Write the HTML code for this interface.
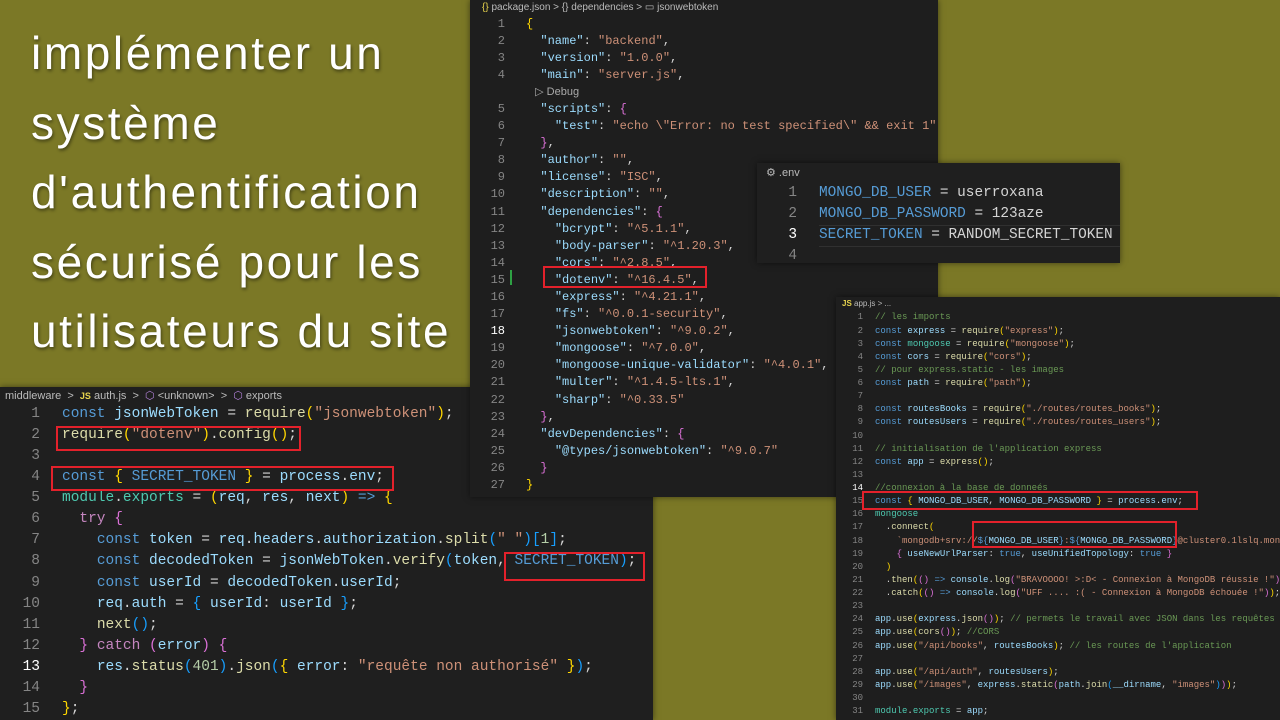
<!DOCTYPE html>
<html><head><meta charset="utf-8"><style>
*{margin:0;padding:0;box-sizing:border-box}
body{width:1280px;height:720px;overflow:hidden;background:#7b7826;position:relative;font-family:"Liberation Sans",sans-serif}
.title{position:absolute;left:31px;top:19px;color:#fff;font-size:46px;line-height:69.5px;text-shadow:1px 2px 3px rgba(0,0,0,.45);letter-spacing:2.6px;white-space:nowrap}
.panel{position:absolute;background:#1e1e1e;overflow:hidden;box-shadow:0 0 6px rgba(0,0,0,.5)}
.code{position:absolute;font-family:"Liberation Mono",monospace;white-space:pre;color:#d4d4d4}
.nums{position:absolute;font-family:"Liberation Mono",monospace;text-align:right;color:#858585;white-space:pre}
.crumb{position:absolute;color:#bbb;font-size:10px;font-family:"Liberation Sans",sans-serif;white-space:pre}
.k{color:#569cd6}.v{color:#9cdcfe}.s{color:#ce9178}.f{color:#dcdcaa}.c{color:#6a9955}.g{color:#ffd700}.p{color:#da70d6}.b{color:#179fff}.t{color:#4ec9b0}.n{color:#b5cea8}.m{color:#c586c0}
.red{position:absolute;border:2px solid #e3212b}
.w{color:#fff}
</style></head><body>
<div class="title">implémenter un<br>système<br>d'authentification<br>sécurisé pour les<br>utilisateurs du site</div>

<!-- auth.js -->
<div class="panel" style="left:0;top:387px;width:653px;height:333px;background:#1f1f1f">
<div class="crumb" style="left:5px;top:2px;font-size:11px">middleware  &gt;  <span style="color:#e8d44d;font-weight:bold;font-size:9px">JS</span> auth.js  &gt;  <span style="color:#b180d7">⬡</span> &lt;unknown&gt;  &gt;  <span style="color:#b180d7">⬡</span> exports</div>
<div class="nums" style="left:0;top:17px;width:40px;font-size:14.5px;line-height:21.07px">1
2
3
4
5
6
7
8
9
10
11
12
<span class="w">13</span>
14
15</div>
<div class="code" style="left:62px;top:17px;font-size:14.5px;line-height:21.07px"><span class="k">const</span> <span class="v">jsonWebToken</span> = <span class="f">require</span><span class="g">(</span><span class="s">"jsonwebtoken"</span><span class="g">)</span>;
<span class="f">require</span><span class="g">(</span><span class="s">"dotenv"</span><span class="g">)</span>.<span class="f">config</span><span class="g">()</span>;

<span class="k">const</span> <span class="g">{</span> <span class="k">SECRET_TOKEN</span> <span class="g">}</span> = <span class="v">process</span>.<span class="v">env</span>;
<span class="t">module</span>.<span class="t">exports</span> = <span class="g">(</span><span class="v">req</span>, <span class="v">res</span>, <span class="v">next</span><span class="g">)</span> <span class="k">=&gt;</span> <span class="g">{</span>
  <span class="m">try</span> <span class="p">{</span>
    <span class="k">const</span> <span class="v">token</span> = <span class="v">req</span>.<span class="v">headers</span>.<span class="v">authorization</span>.<span class="f">split</span><span class="b">(</span><span class="s">" "</span><span class="b">)[</span><span class="n">1</span><span class="b">]</span>;
    <span class="k">const</span> <span class="v">decodedToken</span> = <span class="v">jsonWebToken</span>.<span class="f">verify</span><span class="b">(</span><span class="v">token</span>, <span class="k">SECRET_TOKEN</span><span class="b">)</span>;
    <span class="k">const</span> <span class="v">userId</span> = <span class="v">decodedToken</span>.<span class="v">userId</span>;
    <span class="v">req</span>.<span class="v">auth</span> = <span class="b">{</span> <span class="v">userId</span>: <span class="v">userId</span> <span class="b">}</span>;
    <span class="f">next</span><span class="b">()</span>;
  <span class="p">}</span> <span class="m">catch</span> <span class="p">(</span><span class="v">error</span><span class="p">)</span> <span class="p">{</span>
    <span class="v">res</span>.<span class="f">status</span><span class="b">(</span><span class="n">401</span><span class="b">)</span>.<span class="f">json</span><span class="b">(</span><span class="g">{</span> <span class="v">error</span>: <span class="s">"requête non authorisé"</span> <span class="g">}</span><span class="b">)</span>;
  <span class="p">}</span>
<span class="g">}</span>;</div>
</div>
<div class="red" style="left:56px;top:426px;width:245px;height:25px"></div>
<div class="red" style="left:51px;top:466px;width:343px;height:25px"></div>
<div class="red" style="left:504px;top:552px;width:141px;height:29px"></div>

<!-- package.json -->
<div class="panel" style="left:470px;top:0;width:468px;height:497px">
<div class="crumb" style="left:12px;top:2px"><span style="color:#e8d44d">{}</span> package.json &gt; {} dependencies &gt; ▭ jsonwebtoken</div>
<div class="nums" style="left:0;top:15.5px;width:35px;font-size:12px;line-height:17.1px">1
2
3
4

5
6
7
8
9
10
11
12
13
14
15
16
17
<span class="w">18</span>
19
20
21
22
23
24
25
26
27</div>
<div style="position:absolute;left:40px;top:270px;width:2px;height:15px;background:#2ea043"></div>
<div class="code" style="left:56px;top:15.5px;font-size:12px;line-height:17.1px"><span class="g">{</span>
  <span class="v">"name"</span>: <span class="s">"backend"</span>,
  <span class="v">"version"</span>: <span class="s">"1.0.0"</span>,
  <span class="v">"main"</span>: <span class="s">"server.js"</span>,
<span style="font-family:'Liberation Sans',sans-serif;color:#aaa;font-size:11px">   ▷ Debug</span>
  <span class="v">"scripts"</span>: <span class="p">{</span>
    <span class="v">"test"</span>: <span class="s">"echo \"Error: no test specified\" &amp;&amp; exit 1"</span>
  <span class="p">}</span>,
  <span class="v">"author"</span>: <span class="s">""</span>,
  <span class="v">"license"</span>: <span class="s">"ISC"</span>,
  <span class="v">"description"</span>: <span class="s">""</span>,
  <span class="v">"dependencies"</span>: <span class="p">{</span>
    <span class="v">"bcrypt"</span>: <span class="s">"^5.1.1"</span>,
    <span class="v">"body-parser"</span>: <span class="s">"^1.20.3"</span>,
    <span class="v">"cors"</span>: <span class="s">"^2.8.5"</span>,
    <span class="v">"dotenv"</span>: <span class="s">"^16.4.5"</span>,
    <span class="v">"express"</span>: <span class="s">"^4.21.1"</span>,
    <span class="v">"fs"</span>: <span class="s">"^0.0.1-security"</span>,
    <span class="v">"jsonwebtoken"</span>: <span class="s">"^9.0.2"</span>,
    <span class="v">"mongoose"</span>: <span class="s">"^7.0.0"</span>,
    <span class="v">"mongoose-unique-validator"</span>: <span class="s">"^4.0.1"</span>,
    <span class="v">"multer"</span>: <span class="s">"^1.4.5-lts.1"</span>,
    <span class="v">"sharp"</span>: <span class="s">"^0.33.5"</span>
  <span class="p">}</span>,
  <span class="v">"devDependencies"</span>: <span class="p">{</span>
    <span class="v">"@types/jsonwebtoken"</span>: <span class="s">"^9.0.7"</span>
  <span class="p">}</span>
<span class="g">}</span></div>
</div>
<div class="red" style="left:543px;top:266px;width:164px;height:22px"></div>

<!-- .env -->
<div class="panel" style="left:757px;top:163px;width:363px;height:100px;background:#1f1f1f">
<div class="crumb" style="left:9px;top:3px;font-size:11px;color:#bbb">⚙ .env</div>
<div class="nums" style="left:0;top:20px;width:40px;font-size:14.4px;line-height:21px">1
2
<span class="w">3</span>
4</div>
<div style="position:absolute;left:62px;top:62px;width:301px;height:22px;border-top:1px solid #303030;border-bottom:1px solid #303030"></div>
<div class="code" style="left:62px;top:20px;font-size:14.4px;line-height:21px"><span class="k">MONGO_DB_USER</span> = userroxana
<span class="k">MONGO_DB_PASSWORD</span> = 123aze
<span class="k">SECRET_TOKEN</span> = RANDOM_SECRET_TOKEN
</div>
</div>

<!-- app.js -->
<div class="panel" style="left:836px;top:297px;width:444px;height:423px">
<div class="crumb" style="left:6px;top:2px;font-size:8px"><span style="color:#e8d44d;font-weight:bold">JS</span> app.js &gt; ...</div>
<div class="nums" style="left:0;top:14.4px;width:27px;font-size:9px;line-height:13.13px">1
2
3
4
5
6
7
8
9
10
11
12
13
<span class="w">14</span>
15
16
17
18
19
20
21
22
23
24
25
26
27
28
29
30
31</div>
<div class="code" style="left:39px;top:14.4px;font-size:9px;line-height:13.13px"><span class="c">// les imports</span>
<span class="k">const</span> <span class="v">express</span> = <span class="f">require</span><span class="g">(</span><span class="s">"express"</span><span class="g">)</span>;
<span class="k">const</span> <span class="t">mongoose</span> = <span class="f">require</span><span class="g">(</span><span class="s">"mongoose"</span><span class="g">)</span>;
<span class="k">const</span> <span class="v">cors</span> = <span class="f">require</span><span class="g">(</span><span class="s">"cors"</span><span class="g">)</span>;
<span class="c">// pour express.static - les images</span>
<span class="k">const</span> <span class="v">path</span> = <span class="f">require</span><span class="g">(</span><span class="s">"path"</span><span class="g">)</span>;

<span class="k">const</span> <span class="v">routesBooks</span> = <span class="f">require</span><span class="g">(</span><span class="s">"./routes/routes_books"</span><span class="g">)</span>;
<span class="k">const</span> <span class="v">routesUsers</span> = <span class="f">require</span><span class="g">(</span><span class="s">"./routes/routes_users"</span><span class="g">)</span>;

<span class="c">// initialisation de l'application express</span>
<span class="k">const</span> <span class="v">app</span> = <span class="f">express</span><span class="g">()</span>;

<span class="c">//connexion à la base de donneés</span>
<span class="k">const</span> <span class="g">{</span> <span class="v">MONGO_DB_USER</span>, <span class="v">MONGO_DB_PASSWORD</span> <span class="g">}</span> = <span class="v">process</span>.<span class="v">env</span>;
<span class="t">mongoose</span>
  .<span class="f">connect</span><span class="g">(</span>
    <span class="s">`mongodb+srv://</span><span class="k">${</span><span class="v">MONGO_DB_USER</span><span class="k">}</span><span class="s">:</span><span class="k">${</span><span class="v">MONGO_DB_PASSWORD</span><span class="k">}</span><span class="s">@cluster0.1lslq.mongodb.net</span>
    <span class="p">{</span> <span class="v">useNewUrlParser</span>: <span class="k">true</span>, <span class="v">useUnifiedTopology</span>: <span class="k">true</span> <span class="p">}</span>
  <span class="g">)</span>
  .<span class="f">then</span><span class="g">(</span><span class="p">()</span> <span class="k">=&gt;</span> <span class="v">console</span>.<span class="f">log</span><span class="p">(</span><span class="s">"BRAVOOOO! &gt;:D&lt; - Connexion à MongoDB réussie !"</span><span class="p">)</span><span class="g">)</span>
  .<span class="f">catch</span><span class="g">(</span><span class="p">()</span> <span class="k">=&gt;</span> <span class="v">console</span>.<span class="f">log</span><span class="p">(</span><span class="s">"UFF .... :( - Connexion à MongoDB échouée !"</span><span class="p">)</span><span class="g">)</span>;

<span class="v">app</span>.<span class="f">use</span><span class="g">(</span><span class="v">express</span>.<span class="f">json</span><span class="p">()</span><span class="g">)</span>; <span class="c">// permets le travail avec JSON dans les requêtes</span>
<span class="v">app</span>.<span class="f">use</span><span class="g">(</span><span class="f">cors</span><span class="p">()</span><span class="g">)</span>; <span class="c">//CORS</span>
<span class="v">app</span>.<span class="f">use</span><span class="g">(</span><span class="s">"/api/books"</span>, <span class="v">routesBooks</span><span class="g">)</span>; <span class="c">// les routes de l'application</span>

<span class="v">app</span>.<span class="f">use</span><span class="g">(</span><span class="s">"/api/auth"</span>, <span class="v">routesUsers</span><span class="g">)</span>;
<span class="v">app</span>.<span class="f">use</span><span class="g">(</span><span class="s">"/images"</span>, <span class="v">express</span>.<span class="f">static</span><span class="p">(</span><span class="v">path</span>.<span class="f">join</span><span class="b">(</span><span class="v">__dirname</span>, <span class="s">"images"</span><span class="b">)</span><span class="p">)</span><span class="g">)</span>;

<span class="t">module</span>.<span class="t">exports</span> = <span class="v">app</span>;</div>
</div>
<div class="red" style="left:862px;top:491px;width:336px;height:19px"></div>
<div class="red" style="left:972px;top:521px;width:205px;height:27px"></div>
</body></html>
